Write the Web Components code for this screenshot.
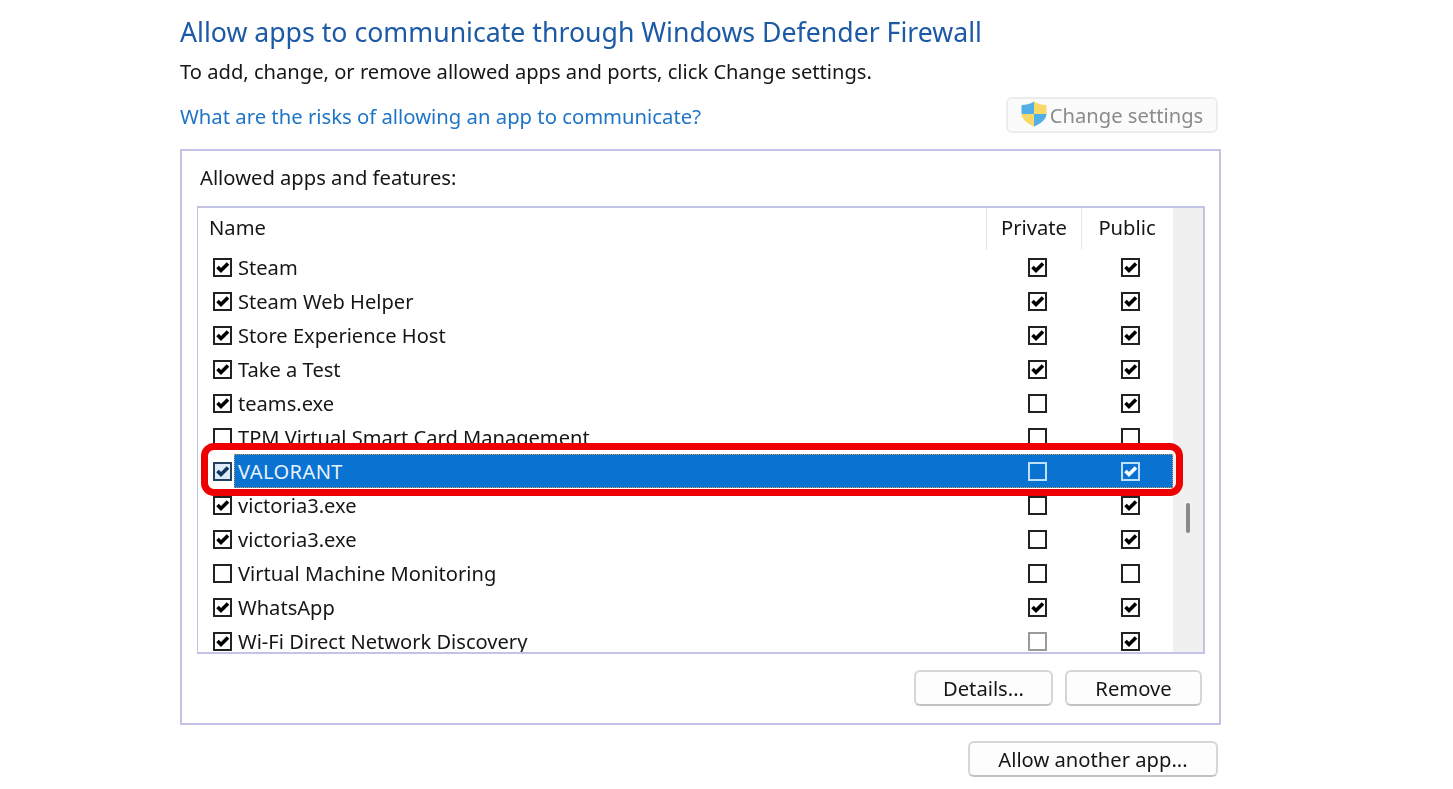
<!DOCTYPE html>
<html>
<head>
<meta charset="utf-8">
<title>Allowed apps</title>
<style>
  html, body { margin: 0; background: #fff; }
  body { font-family: "Noto Sans", "Open Sans", sans-serif; color: #161616; height: 789px; overflow: hidden; }
</style>
</head>
<body>
<fw-page></fw-page>
<script>
class FwShield extends HTMLElement {
    connectedCallback() {
        this.attachShadow({ mode: "open" });
        this.shadowRoot.innerHTML = `
        <style>:host { display: block; width: 26px; height: 26px; margin-top: -3px; } svg { display: block; }</style>
        <svg width="26" height="26" viewBox="0 0 26 26">
            <path d="M13 .5C10 2.500 5.500 4 .5 4V13H13Z" fill="#52aee6"/>
            <path d="M13 .5C16 2.500 20.500 4 25.500 4V13H13Z" fill="#f8d867"/>
            <path d="M.5 13C1 19 7 23 13 25.500V13Z" fill="#f8d867"/>
            <path d="M25.500 13C25 19 19 23 13 25.500V13Z" fill="#52aee6"/>
        </svg>`;
    }
}

class FwButton extends HTMLElement {
    connectedCallback() {
        this.attachShadow({ mode: "open" });
        this.shadowRoot.innerHTML = `
        <style>
            :host {
                display: flex;
                align-items: center;
                justify-content: center;
                box-sizing: border-box;
                height: 36px;
                font-size: 20.2px;
                background: #fdfdfd;
                border: 2px solid #d6d6d6;
                border-bottom-color: #c2c2c2;
                border-radius: 6px;
                color: #161616;
            }
            :host([disabled]) {
                color: #8b8b8b;
                background: #fbfbfb;
                border-color: #ececec;
            }
        </style>
        <slot></slot>`;
    }
}

class FwCheck extends HTMLElement {
    connectedCallback() {
        this.attachShadow({ mode: "open" });
        const on = this.hasAttribute("on");
        this.shadowRoot.innerHTML = `
        <style>
            :host {
                display: block;
                box-sizing: border-box;
                width: 19px;
                height: 19px;
                border: 2px solid var(--check-border, #222);
                background: var(--check-fill, #fff);
            }
            svg { display: block; }
            path { fill: none; stroke: var(--check-mark, #000); stroke-width: 3.6; }
        </style>
        ${on ? `<svg width="15" height="15" viewBox="0 0 15 15"><path d="M2.500 7L6 10.500L13 3.500"/></svg>` : ""}`;
    }
}

class FwRow extends HTMLElement {
    connectedCallback() {
        this.attachShadow({ mode: "open" });
        const box = (attr) => this.hasAttribute(attr) ? "on" : "";
        this.shadowRoot.innerHTML = `
        <style>
            :host {
                display: flex;
                height: 34px;
                flex: none;
                font-size: 20.1px;
            }
            .lead {
                width: 36px;
                flex: none;
                box-sizing: border-box;
                padding-left: 15px;
                display: flex;
                align-items: center;
            }
            .body {
                flex: 1;
                box-sizing: border-box;
                display: grid;
                grid-template-columns: 1fr 100px 86px;
                align-items: center;
                justify-items: center;
            }
            .name { justify-self: start; padding-left: 4px; white-space: nowrap; }
            :host([selected]) .name { letter-spacing: .4px; }
            :host([selected]) .lead { --check-border: #24425f; --check-fill: #dcecf9; --check-mark: #12365c; }
            :host([selected]) .body {
                background: #0a72d0;
                color: #e8f3fd;
                outline: 1px dotted #c99a5a;
                outline-offset: -1px;
                --check-border: #bfe0fb;
                --check-fill: transparent;
                --check-mark: #fff;
            }
            :host([dimmed]) .priv { --check-border: #9a9a9a; }
        </style>
        <div class="lead"><fw-check ${box("checked")}></fw-check></div>
        <div class="body">
            <span class="name"><slot></slot></span>
            <fw-check class="priv" ${box("private")}></fw-check>
            <fw-check ${box("public")}></fw-check>
        </div>`;
    }
}

class FwList extends HTMLElement {
    connectedCallback() {
        this.attachShadow({ mode: "open" });
        this.shadowRoot.innerHTML = `
        <style>
            :host {
                display: flex;
                position: relative;
                box-sizing: border-box;
                height: 448px;
                border: 2px solid #c3c3e6;
                border-left-width: 1px;
                overflow: hidden;
                background: #fff;
            }
            .main { flex: 1; min-width: 0; display: flex; flex-direction: column; }
            .head {
                flex: none;
                height: 42px;
                display: grid;
                grid-template-columns: 1fr 95px 91px;
                padding-right: 1px;
                font-size: 20.2px;
            }
            .head span {
                display: flex;
                align-items: center;
                justify-content: center;
                box-sizing: border-box;
                padding-bottom: 4px;
                border-left: 1px solid #e6e6e6;
            }
            .head span:first-child { justify-content: flex-start; padding-left: 11px; border: 0; }
            .track {
                width: 30px;
                flex: none;
                background: #f0f0f0;
                display: flex;
                justify-content: center;
                align-items: flex-start;
            }
            .thumb { width: 4px; height: 30px; margin-top: 295px; background: #8a8a8a; border-radius: 2px; }
            .mark {
                position: absolute;
                left: 3px;
                top: 235px;
                width: 982px;
                height: 53px;
                box-sizing: border-box;
                border: 7px solid #ee0000;
                border-radius: 13px;
            }
        </style>
        <div class="main">
            <div class="head"><span>Name</span><span>Private</span><span>Public</span></div>
            <slot></slot>
        </div>
        <div class="track"><div class="thumb"></div></div>
        <div class="mark"></div>`;
    }
}

class FwPanel extends HTMLElement {
    connectedCallback() {
        this.attachShadow({ mode: "open" });
        this.shadowRoot.innerHTML = `
        <style>
            :host {
                display: block;
                box-sizing: border-box;
                height: 576px;
                border: 2px solid #c3c3e6;
                padding: 12px 14px 0 15px;
            }
            .label { height: 43px; font-size: 20.2px; line-height: 28px; padding-left: 3px; }
            .actions { display: flex; justify-content: flex-end; gap: 12px; margin-top: 16px; padding-right: 3px; }
            .details { width: 139px; }
            .remove { width: 137px; }
        </style>
        <div class="label">Allowed apps and features:</div>
        <slot></slot>
        <div class="actions">
            <fw-button class="details">Details...</fw-button>
            <fw-button class="remove">Remove</fw-button>
        </div>`;
    }
}

class FwPage extends HTMLElement {
    connectedCallback() {
        this.attachShadow({ mode: "open" });
        const apps = [
            ["Steam", "checked private public"],
            ["Steam Web Helper", "checked private public"],
            ["Store Experience Host", "checked private public"],
            ["Take a Test", "checked private public"],
            ["teams.exe", "checked public"],
            ["TPM Virtual Smart Card Management", ""],
            ["VALORANT", "checked public selected"],
            ["victoria3.exe", "checked public"],
            ["victoria3.exe", "checked public"],
            ["Virtual Machine Monitoring", ""],
            ["WhatsApp", "checked private public"],
            ["Wi-Fi Direct Network Discovery", "checked public dimmed"],
        ];
        this.shadowRoot.innerHTML = `
        <style>
            :host {
                display: block;
                width: 1041px;
                margin-left: 180px;
                padding-top: 12px;
                filter: blur(0.4px);
            }
            h1 { margin: 0; height: 40px; font-size: 26.67px; line-height: 40px; font-weight: 400; color: #1d5aa6; white-space: nowrap; }
            .sub { margin-top: 4px; height: 30px; font-size: 20.15px; line-height: 30px; white-space: nowrap; }
            .bar { display: flex; justify-content: space-between; align-items: center; margin-top: 11px; height: 36px; padding-right: 3px; }
            .bar a { font-size: 20.27px; color: #1e74c6; text-decoration: none; margin-top: 2px; }
            .change { width: 212px; gap: 3px; }
            fw-panel { margin-top: 16px; }
            .allow { width: 250px; margin: 16px 3px 0 auto; }
        </style>
        <h1>Allow apps to communicate through Windows Defender Firewall</h1>
        <div class="sub">To add, change, or remove allowed apps and ports, click Change settings.</div>
        <div class="bar">
            <a>What are the risks of allowing an app to communicate?</a>
            <fw-button class="change" disabled><fw-shield></fw-shield>Change settings</fw-button>
        </div>
        <fw-panel>
            <fw-list>
                ${apps.map(([name, flags]) => `<fw-row ${flags}>${name}</fw-row>`).join("")}
            </fw-list>
        </fw-panel>
        <fw-button class="allow">Allow another app...</fw-button>`;
    }
}

customElements.define("fw-shield", FwShield);
customElements.define("fw-button", FwButton);
customElements.define("fw-check", FwCheck);
customElements.define("fw-row", FwRow);
customElements.define("fw-list", FwList);
customElements.define("fw-panel", FwPanel);
customElements.define("fw-page", FwPage);
</script>
</body>
</html>
